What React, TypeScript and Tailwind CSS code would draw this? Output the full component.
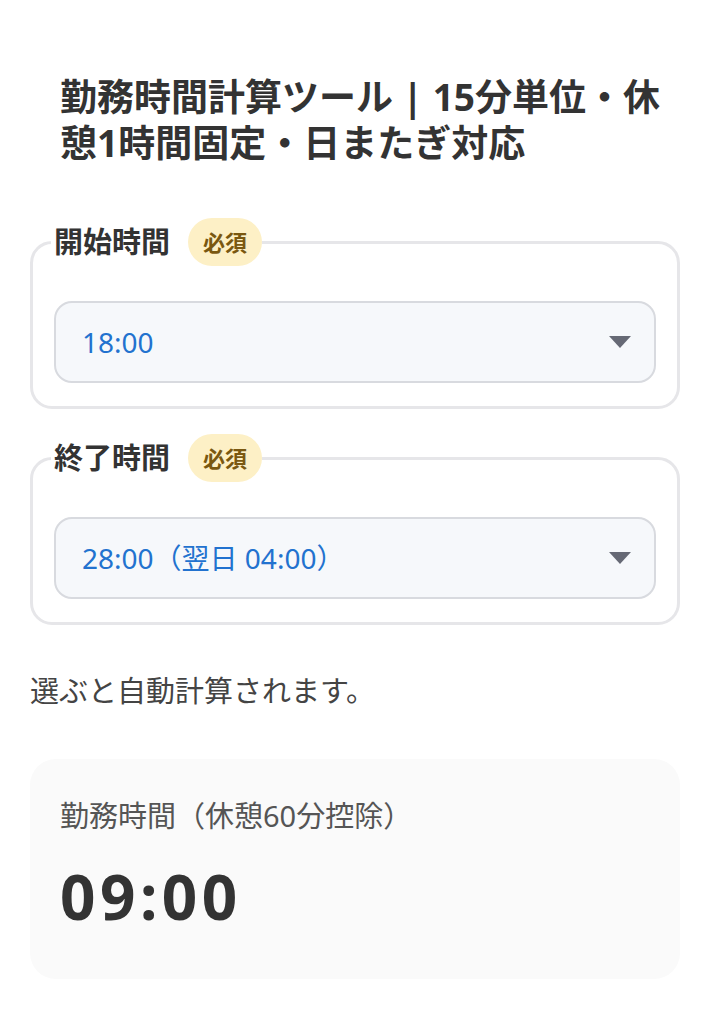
import type { ReactNode } from 'react'

const FONT = '[font-family:"Noto_Sans","Noto_Sans_CJK_JP",sans-serif]'

type TimeFieldProps = {
  label: string
  value: string
}

function Caret() {
  return (
    <svg width="22" height="12" viewBox="0 0 22 12" aria-hidden="true">
      <path d="M0 0h22L11 12z" fill="#666975" />
    </svg>
  )
}

function TimeField({ label, value }: Readonly<TimeFieldProps>) {
  return (
    <fieldset className="m-0 min-w-0 rounded-[22px] border-[3px] border-[#e6e6e9] px-[21px] pt-[35px] pb-[23px]">
      <legend className="-ml-[3px] flex items-center gap-[18px] pl-[3px]">
        <span className="text-[29px] leading-[46px] font-bold text-[#333]">{label}</span>
        <span className="inline-flex h-[48px] items-center rounded-full bg-[#fdf0c6] px-[15px] text-[22px] font-bold text-[#7a5810]">
          必須
        </span>
      </legend>
      <div className="flex h-[82px] items-center justify-between rounded-[18px] border-2 border-[#d8dadf] bg-[#f6f8fb] pr-[23px] pl-[26px]">
        <span className="text-[28px] text-[#2272cf]">{value}</span>
        <Caret />
      </div>
    </fieldset>
  )
}

function Section({ children }: Readonly<{ children: ReactNode }>) {
  return <div className="flex flex-col gap-[25px]">{children}</div>
}

export default function App() {
  return (
    <div className={`${FONT} min-h-[1024px] bg-white px-[30px] pt-[74px] pb-[46px]`}>
      <h1 className="pr-[8px] pl-[30px] text-[37px] leading-[46px] font-bold text-[#333]">
        勤務時間計算ツール | 15分単位・休憩1時間固定・日またぎ対応
      </h1>

      <div className="mt-[52px]">
        <Section>
          <TimeField label="開始時間" value="18:00" />
          <TimeField label="終了時間" value="28:00（翌日 04:00）" />
        </Section>
      </div>

      <p className="mt-[45px] text-[29px] leading-[42px] text-[#444]">選ぶと自動計算されます。</p>

      <div className="mt-[47px] rounded-[26px] bg-[#fafafa] px-[30px] pt-[36px] pb-[49px]">
        <p className="text-[29px] leading-[42px] text-[#555]">勤務時間（休憩60分控除）</p>
        <p className="mt-[26px] text-[62px] leading-[67px] font-bold tracking-[4.5px] text-[#333]">
          09:00
        </p>
      </div>
    </div>
  )
}
